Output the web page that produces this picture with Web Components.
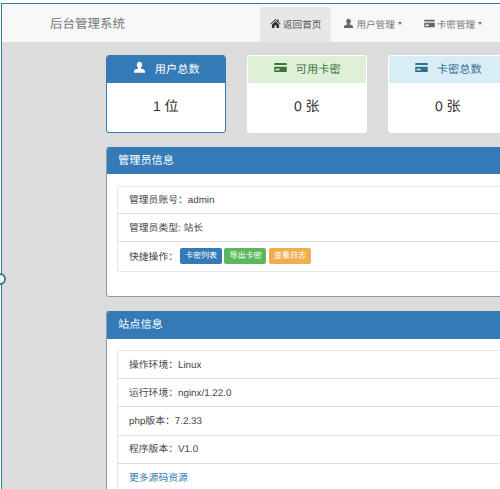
<!DOCTYPE html>
<html lang="zh">
<head>
<meta charset="utf-8">
<title>后台管理系统</title>
<style>
html,body{margin:0;padding:0;height:489px;overflow:hidden;background:#fff;}
body{font-family:"Liberation Sans","Noto Sans CJK SC",sans-serif;color:#333;text-rendering:geometricPrecision;}
</style>
</head>
<body>
<admin-shell>
  <top-nav slot="nav" brand="后台管理系统">
    <nav-item icon="home" active>返回首页</nav-item>
    <nav-item icon="user" caret>用户管理</nav-item>
    <nav-item icon="card" caret>卡密管理</nav-item>
  </top-nav>
  <stat-row>
    <stat-card tone="primary" icon="user" label="用户总数">1 位</stat-card>
    <stat-card tone="success" icon="card" label="可用卡密">0 张</stat-card>
    <stat-card tone="info" icon="card" label="卡密总数">0 张</stat-card>
  </stat-row>
  <info-panel heading="管理员信息" head="26" pad="12" bottom="24">
    <list-row h="27">管理员账号：admin</list-row>
    <list-row h="28">管理员类型: 站长</list-row>
    <list-row h="29">快捷操作：<span style="display:inline-block;width:2px"></span><tag-button tone="blue">卡密列表</tag-button><tag-button tone="green">导出卡密</tag-button><tag-button tone="orange">查看日志</tag-button></list-row>
  </info-panel>
  <info-panel heading="站点信息" head="27" pad="11" bottom="0">
    <list-row h="28.2">操作环境：Linux</list-row>
    <list-row h="28.2">运行环境：nginx/1.22.0</list-row>
    <list-row h="28.2">php版本：7.2.33</list-row>
    <list-row h="28.2">程序版本：V1.0</list-row>
    <list-row h="28.2" link>更多源码资源</list-row>
  </info-panel>
</admin-shell>
<script>
const ICONS = {
  home:'<path d="M8 1.6 .6 8.2l.8.9L8 3.4l6.6 5.7.8-.9-2.6-2.3V2.2h-1.9v2L8 1.6ZM2.8 9.4V14.6h3.7v-3.8h3v3.8h3.7V9.4L8 4.9 2.8 9.4Z"/>',
  user:'<path d="M8 1c-2 0-3.3 1.5-3.3 3.6 0 1.5.6 2.8 1.5 3.5v1.2c-2 .6-4.4 1.4-4.7 2.5-.2.8-.3 1.7-.3 2.7h13.6c0-1-.1-1.9-.3-2.7-.3-1.1-2.7-1.9-4.7-2.5V8.100c.9-.7 1.5-2 1.5-3.500C11.300 2.500 10 1 8 1Z"/>',
  card:'<path fill-rule="evenodd" d="M1 2.500h14a.7.7 0 0 1 .7.7v9.600a.7.7 0 0 1-.7.7H1a.7.7 0 0 1-.7-.7V3.200a.7.7 0 0 1 .7-.7ZM.3 5v2h15.400V5H.3Zm1.700 4.500v2h5v-2H2Z"/>'
};
function svg(name,size){
  return `<svg viewBox="0 0 16 16" width="${size}" height="${size}" fill="currentColor" aria-hidden="true">${ICONS[name]}</svg>`;
}
function def(name,render){
  customElements.define(name,class extends HTMLElement{
    connectedCallback(){
      if(this.shadowRoot) return;
      this.attachShadow({mode:'open'}).innerHTML = render(this);
    }
  });
}
def('admin-shell',()=>`<style>
  :host{display:block;position:relative;height:489px;box-sizing:border-box;padding:3px 0 0 1px;overflow:hidden;}
  .frame{height:100%;box-sizing:border-box;border-top:1px solid #2f7f92;border-left:1px solid #2f7f92;background:#dcdcdc;display:flex;flex-direction:column;overflow:hidden;}
  main{padding:13px 0 0 104px;width:504px;box-sizing:border-box;display:flex;flex-direction:column;}
  .dot{position:absolute;left:-6px;top:273px;width:8px;height:8px;border:2px solid #2f7f92;border-radius:50%;background:#fff;}
</style>
<div class="frame"><slot name="nav"></slot><main><slot></slot></main></div><div class="dot"></div>`);
def('top-nav',el=>`<style>
  :host{display:flex;flex:none;height:38px;background:#f8f8f8;box-sizing:border-box;padding:3px 0 0 48px;}
  .brand{font-size:12.500px;line-height:35px;color:#777;width:210px;flex:none;}
  .items{display:flex;gap:2px;}
</style><div class="brand">${el.getAttribute('brand')}</div><div class="items"><slot></slot></div>`);
def('nav-item',el=>`<style>
  :host{display:flex;align-items:center;flex:none;height:35px;box-sizing:border-box;padding:0 10px 2px;font-size:9.600px;color:#777;gap:1px;}
  :host([active]){background:#e7e7e7;color:#555;border-radius:2px 2px 0 0;}
  svg{flex:none;margin-right:1px;}
  :host([active]) svg{color:#333;}
  :host(:not([active])) svg{color:#666;}
  .c{width:0;height:0;border-top:3px solid #777;border-left:2.500px solid transparent;border-right:2.500px solid transparent;margin-left:2px;}
</style>${svg(el.getAttribute('icon'),11)}<slot></slot>${el.hasAttribute('caret')?'<span class="c"></span>':''}`);
def('stat-row',()=>`<style>:host{display:flex;gap:21.500px;flex:none;margin-bottom:14px;}</style><slot></slot>`);
const TONES={primary:['#337ab7','#fff','#337ab7'],success:['#dff0d8','#3c763d','#fff'],info:['#d9edf7','#31708f','#fff']};
def('stat-card',el=>{const t=TONES[el.getAttribute('tone')];return `<style>
  :host{display:block;flex:none;width:119.500px;height:78px;box-sizing:border-box;background:#fff;border:1px solid ${t[2]};border-radius:3px;overflow:hidden;}
  .h{height:27px;background:${t[0]};color:${t[1]};display:flex;align-items:center;justify-content:center;gap:9px;font-size:11.200px;padding:0 0 1px 1px;box-sizing:border-box;}
  .h svg{position:relative;top:-2px;}
  .b{height:49px;box-sizing:border-box;padding-bottom:3px;display:flex;align-items:center;justify-content:center;font-size:14px;color:#333;}
</style><div class="h">${svg(el.getAttribute('icon'),13)}<span>${el.getAttribute('label')}</span></div><div class="b"><slot></slot></div>`});
def('info-panel',el=>`<style>
  :host{display:block;flex:none;width:400px;background:#fff;border:1px solid #8d9cab;border-top-color:#337ab7;border-radius:3px;box-sizing:border-box;margin-bottom:14px;overflow:hidden;}
  .h{height:${el.getAttribute('head')}px;background:#337ab7;color:#fff;font-size:11.200px;line-height:${el.getAttribute('head')}px;padding-left:11px;}
  .b{padding:${el.getAttribute('pad')}px 0 ${el.getAttribute('bottom')}px 10px;}
  .l{border:1px solid #e4e6e8;border-right:0;border-radius:2px 0 0 2px;}
</style><div class="h">${el.getAttribute('heading')}</div><div class="b"><div class="l"><slot></slot></div></div>`);
def('list-row',el=>`<style>
  :host{display:flex;align-items:center;height:${el.getAttribute('h')}px;box-sizing:border-box;padding:0 0 2px 11px;font-size:9.800px;color:#444;border-bottom:1px solid #dcdfe1;background:#fff;white-space:pre;}
  :host(:last-child){border-bottom:0;}
  :host([link]){color:#337ab7;}
</style><slot></slot>`);
const BTN={blue:'#337ab7',green:'#5cb85c',orange:'#f0ad4e'};
def('tag-button',el=>`<style>
  :host{display:inline-flex;align-items:center;justify-content:center;width:42px;height:16px;margin-right:2.500px;border-radius:2px;background:${BTN[el.getAttribute('tone')]};color:#fff;font-size:8px;}
</style><slot></slot>`);
</script>
</body>
</html>
